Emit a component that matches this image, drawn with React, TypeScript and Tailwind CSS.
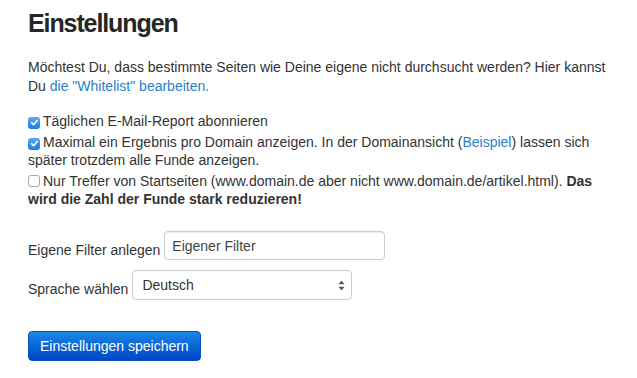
import React from "react";

function Check({ checked }: { checked: boolean }) {
  if (checked) {
    return (
      <span className="inline-flex h-[12px] w-[12px] shrink-0 items-center justify-center rounded-[3px] bg-gradient-to-b from-[#5aa8f2] to-[#1c7ae6] align-[-1px] mr-[3px]">
        <svg width="9" height="9" viewBox="0 0 9 9">
          <path d="M1.8 4.8 L3.7 6.6 L7.2 2.4" fill="none" stroke="white" strokeWidth="1.6" strokeLinecap="round" strokeLinejoin="round" />
        </svg>
      </span>
    );
  }
  return (
    <span className="inline-block h-[12px] w-[12px] shrink-0 rounded-[3px] border border-[#a6a6a6] bg-white align-[-1px] mr-[3px]" />
  );
}

export default function App() {
  return (
    <div className="min-h-screen bg-white pl-[28px] pr-[22px] pt-[6px] text-[14px] leading-[20px] text-[#333]" style={{ fontFamily: '"Liberation Sans", Arial, sans-serif' }}>
      <h1 className="text-[25px] font-bold leading-[34px] text-[#262626] tracking-[-1.1px]">Einstellungen</h1>

      <p className="mt-[18px] leading-[19px]">
        Möchtest Du, dass bestimmte Seiten wie Deine eigene nicht durchsucht werden? Hier kannst Du{" "}
        <a href="#" className="text-[#2a7fc9]">die "Whitelist" bearbeiten.</a>
      </p>

      <div className="mt-[16px] flex flex-col gap-[3px] leading-[18px]">
        <label className="block">
          <Check checked />Täglichen E-Mail-Report abonnieren
        </label>
        <label className="block">
          <Check checked />Maximal ein Ergebnis pro Domain anzeigen. In der Domainansicht (
          <a href="#" className="text-[#2a7fc9]">Beispiel</a>) lassen sich später trotzdem alle Funde anzeigen.
        </label>
        <label className="block">
          <Check checked={false} />Nur Treffer von Startseiten (www.domain.de aber nicht www.domain.de/artikel.html).{" "}
          <b>Das wird die Zahl der Funde stark reduzieren!</b>
        </label>
      </div>

      <div className="mt-[23px] flex items-center gap-[4px]">
        <span className="pt-[8px]">Eigene Filter anlegen</span>
        <input
          defaultValue="Eigener Filter"
          className="h-[29px] w-[221px] rounded-[4px] border border-[#ccc] px-[7px] text-[14px] text-[#444] shadow-[inset_0_1px_1px_rgba(0,0,0,0.075)] outline-none"
        />
      </div>

      <div className="mt-[10px] flex items-center gap-[4px]">
        <span className="pt-[8px]">Sprache wählen</span>
        <div className="flex h-[30px] w-[220px] items-center justify-between rounded-[4px] border border-[#ccc] bg-white pl-[9px] pr-[6px] text-[#333]">
          <span>Deutsch</span>
          <svg width="7" height="11" viewBox="0 0 7 11">
            <path d="M3.5 0.5 L6.5 4.3 L0.5 4.3 Z" fill="#555" />
            <path d="M3.5 10.5 L6.5 6.7 L0.5 6.7 Z" fill="#555" />
          </svg>
        </div>
      </div>

      <button className="mt-[31px] h-[30px] rounded-[4px] border border-[#0a4fb8] bg-gradient-to-b from-[#1d86e6] to-[#0446c6] px-[11px] text-[14px] font-normal text-white">
        Einstellungen speichern
      </button>
    </div>
  );
}
